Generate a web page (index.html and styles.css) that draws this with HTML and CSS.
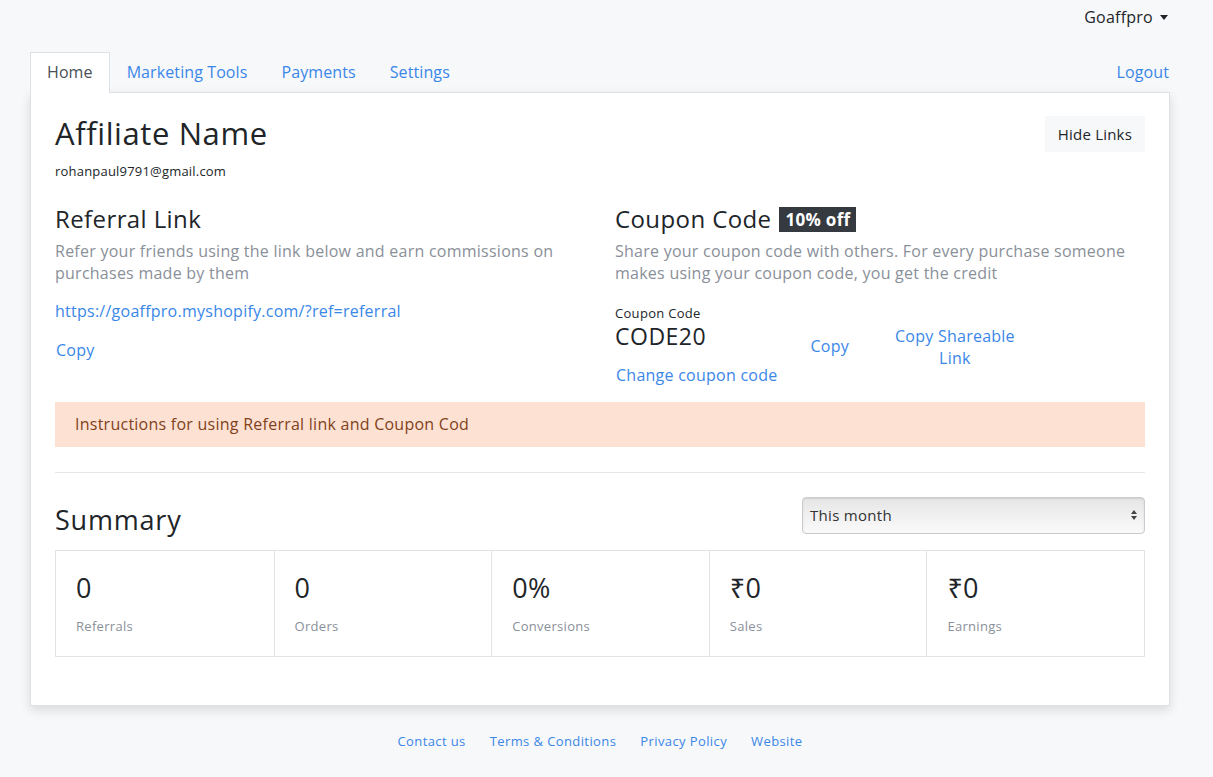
FILE: index.html
```html
<!DOCTYPE html>
<html>
<head>
<meta charset="utf-8">
<link rel="stylesheet" href="styles.css">
</head>
<body>
<div class="page">
  <div class="topbar">
    <span class="user">Goaffpro <span class="caret"></span></span>
  </div>
  <div class="tabs">
    <a class="tab active">Home</a>
    <a class="tab">Marketing Tools</a>
    <a class="tab">Payments</a>
    <a class="tab">Settings</a>
    <a class="tab logout">Logout</a>
  </div>
  <div class="card">
    <div class="head">
      <div>
        <h1 class="name">Affiliate Name</h1>
        <div class="email">rohanpaul9791@gmail.com</div>
      </div>
      <button class="btn-light">Hide Links</button>
    </div>
    <div class="cols">
      <div class="col">
        <h2 class="sec-title">Referral Link</h2>
        <p class="muted">Refer your friends using the link below and earn commissions on purchases made by them</p>
        <a class="link ref">https://goaffpro.myshopify.com/?ref=referral</a>
        <a class="link copy1">Copy</a>
      </div>
      <div class="col">
        <h2 class="sec-title">Coupon Code <span class="badge">10% off</span></h2>
        <p class="muted">Share your coupon code with others. For every purchase someone makes using your coupon code, you get the credit</p>
        <div class="coupon-row">
          <div class="coupon-main">
            <div class="small-label">Coupon Code</div>
            <div class="code">CODE20</div>
            <a class="link">Change coupon code</a>
          </div>
          <a class="link copy2">Copy</a>
          <a class="link share">Copy Shareable<br>Link</a>
        </div>
      </div>
    </div>
    <div class="alert">Instructions for using Referral link and Coupon Cod</div>
    <hr class="sep">
    <div class="sum-head">
      <h2 class="sum-title">Summary</h2>
      <div class="select"><span>This month</span><span class="arrows"><i class="up"></i><i class="down"></i></span></div>
    </div>
    <div class="stats">
      <div class="stat"><div class="num">0</div><div class="lbl">Referrals</div></div>
      <div class="stat"><div class="num">0</div><div class="lbl">Orders</div></div>
      <div class="stat"><div class="num">0%</div><div class="lbl">Conversions</div></div>
      <div class="stat"><div class="num">₹0</div><div class="lbl">Sales</div></div>
      <div class="stat"><div class="num">₹0</div><div class="lbl">Earnings</div></div>
    </div>
  </div>
  <div class="footer">
    <a>Contact us</a>
    <a>Terms &amp; Conditions</a>
    <a>Privacy Policy</a>
    <a>Website</a>
  </div>
</div>
</body>
</html>
```
FILE: styles.css
```css
* { box-sizing: border-box; }
html, body { margin: 0; padding: 0; }
body {
  background: #f7f8fa;
  font-family: "Open Sans", "Noto Sans", sans-serif;
  color: #212529;
  letter-spacing: 0.25px;
}
.page { width: 1140px; margin: 0 0 0 30px; padding-top: 5px; }
.topbar { display: flex; justify-content: flex-end; align-items: flex-start; height: 47px; padding-right: 2px; }
.user { font-size: 16px; color: #212529; line-height: 24px; display: flex; align-items: center; }
.caret { display: inline-block; margin-left: 7px; width: 0; height: 0; border-left: 4.5px solid transparent; border-right: 4.5px solid transparent; border-top: 5px solid #212529; }
.tabs { display: flex; align-items: flex-end; height: 40px; }
.tab {
  display: block; font-size: 16px; color: #3a87e8; padding: 0 16px; height: 40px; line-height: 38px;
  border: 1px solid transparent; border-bottom: none; position: relative; z-index: 1; letter-spacing: 0.1px;
}
.tab.active { color: #495057; background: #fff; border-color: #dee2e6; margin-bottom: -1px; height: 41px; }
.tab.logout { margin-left: auto; padding-right: 0; }
.card {
  background: #fff; border: 1px solid #dee2e6; padding: 21px 24px 48px;
  box-shadow: 0 4px 10px rgba(0,0,0,0.12);
}
.head { display: flex; justify-content: space-between; align-items: flex-start; }
.name { font-size: 31px; font-weight: 400; margin: 0; line-height: 38px; color: #212529; letter-spacing: 0.6px; }
.email { font-size: 13px; margin-top: 10px; letter-spacing: 0.2px; }
.btn-light {
  font-family: inherit; font-size: 15px; letter-spacing: 0.2px; background: #f7f8fa; border: none; color: #212529;
  padding: 0 13px; height: 36px; margin-top: 2px;
}
.cols { display: flex; gap: 30px; margin-top: 24px; }
.col { flex: 1; }
.sec-title { font-size: 24px; font-weight: 400; margin: 0; line-height: 30px; display: flex; align-items: center; letter-spacing: 0.4px; }
.badge { background: #343a40; color: #fff; font-size: 17px; font-weight: 700; padding: 0 6px; height: 25px; line-height: 25px; margin-left: 8px; letter-spacing: 0.3px; }
.muted { color: #8a9099; font-size: 16px; line-height: 22px; margin: 6px 0 0; }
.link { color: #3a87e8; font-size: 16px; display: block; }
.ref { margin-top: 16px; line-height: 22px; }
.copy1 { margin-top: 17px; line-height: 22px; margin-left: 1px; }
.coupon-row { display: flex; align-items: flex-start; margin-top: 21px; }
.coupon-main .link { line-height: 22px; margin-top: 13px; margin-left: 1px; }
.small-label { font-size: 13px; line-height: 16px; letter-spacing: 0.3px; }
.code { font-size: 23px; line-height: 30px; letter-spacing: 0.5px; }
.copy2 { margin-left: 33px; margin-top: 30px; line-height: 22px; }
.share { margin-left: 46px; margin-top: 20px; text-align: center; line-height: 22px; }
.alert {
  background: #fde1d3; color: #81411b; font-size: 16px; padding: 0 20px; height: 45px; line-height: 45px;
  margin-top: 16px;
}
.sep { border: none; border-top: 1px solid #e5e6e8; margin: 25px 0 0; }
.sum-head { display: flex; justify-content: space-between; align-items: center; margin-top: 20px; }
.sum-title { font-size: 27px; font-weight: 400; margin: 10px 0 0; line-height: 34px; letter-spacing: 0.8px; }
.select {
  width: 343px; height: 37px; border: 1px solid #c9cbd0; border-radius: 4px;
  background: linear-gradient(#e6e6e6, #fafafa); box-shadow: inset 0 1px 2px rgba(0,0,0,0.1);
  display: flex; justify-content: space-between; align-items: center; padding: 0 7px; font-size: 15px; color: #333; letter-spacing: 0.3px;
}
.arrows { display: flex; flex-direction: column; gap: 2px; }
.arrows i { display: block; width: 0; height: 0; border-left: 3px solid transparent; border-right: 3px solid transparent; }
.arrows .up { border-bottom: 4px solid #444; }
.arrows .down { border-top: 4px solid #444; }
.stats { display: grid; grid-template-columns: repeat(5, 1fr); margin-top: 13px; border: 1px solid #e2e3e5; }
.stat { padding: 19px 20px 22px; border-left: 1px solid #e2e3e5; height: 105px; }
.stat:first-child { border-left: none; }
.num { font-size: 27px; line-height: 36px; color: #212529; }
.lbl { font-size: 13px; color: #8a9099; margin-top: 11px; letter-spacing: 0.3px; }
.footer { display: flex; justify-content: center; gap: 24px; margin-top: 26px; font-size: 13px; letter-spacing: 0.4px; }
.footer a { color: #3a87e8; }
```
